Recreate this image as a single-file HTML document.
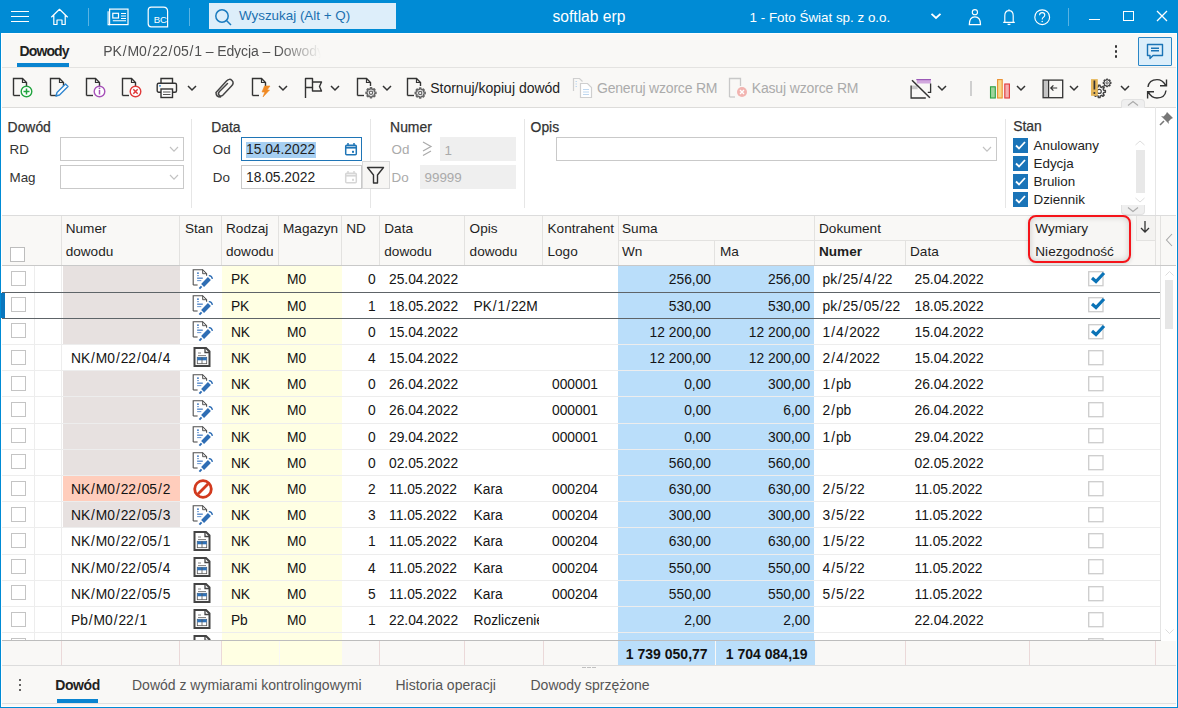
<!DOCTYPE html>
<html><head><meta charset="utf-8"><style>
html,body{margin:0;padding:0;width:1178px;height:708px;overflow:hidden;background:#F9F8F6;font-family:"Liberation Sans", sans-serif}
body>div,body>svg,div>div,div>svg{position:absolute}
.t{white-space:nowrap}
.sl{margin:0 0.92px}
svg{overflow:visible}
</style></head><body>
<div style="left:0px;top:0px;width:1178px;height:33px;background:#008BD5"></div>
<div style="left:11px;top:11px;width:18px;height:1.3px;background:#fff"></div>
<div style="left:11px;top:16px;width:18px;height:1.3px;background:#fff"></div>
<div style="left:11px;top:21px;width:18px;height:1.3px;background:#fff"></div>
<svg style="left:50px;top:8px;" width="20" height="18" viewBox="0 0 20 18"><path d="M1.3 9.2 L9.5 1.3 L17.7 9.2 M3.8 7.2 V16.5 H7 V12 H12 V16.5 H15.2 V7.2" fill="none" stroke="#fff" stroke-width="1.2" stroke-linejoin="round"/></svg>
<div style="left:88px;top:8px;width:1px;height:18px;background:rgba(255,255,255,0.35)"></div>
<svg style="left:107px;top:8px;" width="22" height="18" viewBox="0 0 22 18"><rect x="2.6" y="1.1" width="18.4" height="15.5" fill="none" stroke="#fff" stroke-width="1.2"/><path d="M1.1 3.2 V16.6 H3" fill="none" stroke="#fff" stroke-width="1.1"/><rect x="5.8" y="5.3" width="5.7" height="4.7" fill="none" stroke="#fff" stroke-width="1.2"/><path d="M14 5.5 H19 M14 8 H19 M14 10.5 H19 M5.8 12.8 H19" stroke="#fff" stroke-width="1.1"/></svg>
<svg style="left:147px;top:6px;" width="23" height="22" viewBox="0 0 23 22"><path d="M4.2 1.2 H16.5 Q20.6 1.2 20.6 5.3 V20.8 H4.2 Q1.2 20.8 1.2 17.8 V4.2 Q1.2 1.2 4.2 1.2 Z" fill="none" stroke="#fff" stroke-width="1.2"/><text x="13.3" y="16.6" font-family="Liberation Sans" font-size="9.6" fill="#fff" text-anchor="middle">BC</text></svg>
<div style="left:189px;top:8px;width:1px;height:18px;background:rgba(255,255,255,0.35)"></div>
<div style="left:209px;top:3px;width:187px;height:26px;background:#DDEEFA"></div>
<svg style="left:214px;top:8px;" width="19" height="18" viewBox="0 0 19 18"><circle cx="8" cy="8" r="6.2" fill="none" stroke="#1A7BBF" stroke-width="1.5"/><path d="M12.5 12.5 L17 17" stroke="#1A7BBF" stroke-width="1.5"/></svg>
<div class="t" style="left:239px;top:9.16px;font-size:13.4px;line-height:13.4px;color:#1A70B0;font-weight:400;">Wyszukaj (Alt + Q)</div>
<div class="t" style="left:552.5px;top:8.79px;font-size:15.6px;line-height:15.6px;color:#fff;font-weight:400;">softlab erp</div>
<div class="t" style="left:749.6px;top:10.66px;font-size:13.4px;line-height:13.4px;color:#fff;font-weight:400;">1 - Foto Świat sp. z o.o.</div>
<svg style="left:930px;top:12px;" width="12" height="8" viewBox="0 0 12 8"><path d="M1.5 1.8 L6 6 L10.5 1.8" fill="none" stroke="#fff" stroke-width="1.8"/></svg>
<svg style="left:968px;top:8px;" width="15" height="18" viewBox="0 0 15 18"><circle cx="6.9" cy="4.2" r="2.6" fill="none" stroke="#fff" stroke-width="1.1"/><path d="M1.3 16.6 Q1.3 8.9 6.9 8.9 Q12.5 8.9 12.5 16.6 Z" fill="none" stroke="#fff" stroke-width="1.2"/></svg>
<svg style="left:1002px;top:8px;" width="15" height="18" viewBox="0 0 15 18"><path d="M7 1.2 V2.4 M2.8 14.3 V7.8 Q2.8 2.6 7 2.6 Q11.2 2.6 11.2 7.8 V14.3 H12.8 H1.2 Z" fill="none" stroke="#fff" stroke-width="1.15"/><path d="M5.6 16.4 H8.4" stroke="#fff" stroke-width="1.3"/></svg>
<svg style="left:1033px;top:9px;" width="19" height="17" viewBox="0 0 19 17"><circle cx="9.2" cy="8.2" r="7.4" fill="none" stroke="#fff" stroke-width="1.15"/><path d="M6.6 6.3 Q6.6 3.6 9.2 3.6 Q11.8 3.6 11.8 6.1 Q11.8 7.6 10.2 8.4 Q9.2 9 9.2 10.5" fill="none" stroke="#fff" stroke-width="1.1"/><circle cx="9.2" cy="12.5" r="0.75" fill="#fff"/></svg>
<div style="left:1067.5px;top:8px;width:1px;height:18px;background:rgba(255,255,255,0.35)"></div>
<div style="left:1088.5px;top:19px;width:11px;height:1.4px;background:#fff"></div>
<div style="left:1122.5px;top:10.5px;width:11px;height:10px;border:1.3px solid #fff;box-sizing:border-box"></div>
<svg style="left:1156px;top:10px;" width="12" height="12" viewBox="0 0 12 12"><path d="M1 1 L11 11 M11 1 L1 11" stroke="#fff" stroke-width="1.3"/></svg>
<div style="left:1px;top:33px;width:1175px;height:34px;background:#F9F8F6"></div>
<div class="t" style="left:19.6px;top:44.15px;font-size:14px;line-height:14px;color:#222;font-weight:700;letter-spacing:-0.9px">Dowody</div>
<div style="left:17px;top:63px;width:52px;height:4px;background:#0A84D0"></div>
<div class="t" style="left:103.3px;top:44.15px;font-size:14px;line-height:14px;color:#505050;font-weight:400;letter-spacing:-0.1px;-webkit-mask-image:linear-gradient(to right,#000 175px,transparent 218px);width:225px;overflow:hidden;white-space:nowrap">PK<span class=sl>/</span>M0<span class=sl>/</span>22<span class=sl>/</span>05<span class=sl>/</span>1 – Edycja – Dowody</div>
<div style="left:1px;top:67px;width:1175px;height:1px;background:#E4E3E1"></div>
<div style="left:1114.8px;top:45.3px;width:2.5px;height:2.5px;background:#333;border-radius:1px"></div>
<div style="left:1114.8px;top:50.3px;width:2.5px;height:2.5px;background:#333;border-radius:1px"></div>
<div style="left:1114.8px;top:55.199999999999996px;width:2.5px;height:2.5px;background:#333;border-radius:1px"></div>
<div style="left:1138px;top:37px;width:34px;height:29px;background:#DCEEFA;border:1px solid #2A86C6;box-sizing:border-box;border-radius:1px"></div>
<svg style="left:1146px;top:43px;" width="18" height="18" viewBox="0 0 18 18"><path d="M1.5 1.5 H16.5 V12.5 H7 L4 15.5 V12.5 H1.5 Z" fill="none" stroke="#1A73B5" stroke-width="1.4" stroke-linejoin="round"/><path d="M5 5.2 H13 M5 7.8 H13" stroke="#1A73B5" stroke-width="1.4"/></svg>
<div style="left:1px;top:68px;width:1175px;height:39px;background:#F9F8F6"></div>
<div style="left:1px;top:107px;width:1175px;height:1px;background:#DDDCDA"></div>
<svg style="left:11.8px;top:76.9px;" width="22" height="22" viewBox="0 0 22 22"><path d="M1.5 18.5 V1.5 H10.5 L14.5 5.5 V9" fill="none" stroke="#333" stroke-width="1.4"/><path d="M10.5 1.5 V5.5 H14.5" fill="none" stroke="#333" stroke-width="1.2"/><path d="M1.5 18.5 H8" fill="none" stroke="#333" stroke-width="1.4"/><circle cx="14.5" cy="14.5" r="5.3" fill="#fff" stroke="#22A43F" stroke-width="1.4"/><path d="M14.5 11.5 V17.5 M11.5 14.5 H17.5" stroke="#22A43F" stroke-width="1.5"/></svg>
<svg style="left:48.8px;top:76.9px;" width="22" height="22" viewBox="0 0 22 22"><path d="M1.5 18.5 V1.5 H10.5 L14.5 5.5 V9" fill="none" stroke="#333" stroke-width="1.4"/><path d="M10.5 1.5 V5.5 H14.5" fill="none" stroke="#333" stroke-width="1.2"/><path d="M1.5 18.5 H8" fill="none" stroke="#333" stroke-width="1.4"/><path d="M7 19 L8 15.5 L16.5 7 L19 9.5 L10.5 18 Z" fill="#fff" stroke="#2F86D0" stroke-width="1.4" stroke-linejoin="round"/></svg>
<svg style="left:84.8px;top:76.9px;" width="22" height="22" viewBox="0 0 22 22"><path d="M1.5 18.5 V1.5 H10.5 L14.5 5.5 V9" fill="none" stroke="#333" stroke-width="1.4"/><path d="M10.5 1.5 V5.5 H14.5" fill="none" stroke="#333" stroke-width="1.2"/><path d="M1.5 18.5 H8" fill="none" stroke="#333" stroke-width="1.4"/><circle cx="14.5" cy="14.5" r="5.3" fill="#fff" stroke="#A752B8" stroke-width="1.4"/><path d="M14.5 13 V17.5" stroke="#A752B8" stroke-width="1.5"/><circle cx="14.5" cy="11.3" r="0.9" fill="#A752B8"/></svg>
<svg style="left:120.8px;top:76.9px;" width="22" height="22" viewBox="0 0 22 22"><path d="M1.5 18.5 V1.5 H10.5 L14.5 5.5 V9" fill="none" stroke="#333" stroke-width="1.4"/><path d="M10.5 1.5 V5.5 H14.5" fill="none" stroke="#333" stroke-width="1.2"/><path d="M1.5 18.5 H8" fill="none" stroke="#333" stroke-width="1.4"/><circle cx="14.5" cy="14.5" r="5.3" fill="#fff" stroke="#E03A3A" stroke-width="1.4"/><path d="M12.3 12.3 L16.7 16.7 M16.7 12.3 L12.3 16.7" stroke="#E03A3A" stroke-width="1.5"/></svg>
<svg style="left:156px;top:77px;" width="22" height="22" viewBox="0 0 22 22"><path d="M5 6 V1.5 H16.5 V6" fill="none" stroke="#333" stroke-width="1.4"/><rect x="1.2" y="6.2" width="19.3" height="9" rx="1.5" fill="none" stroke="#333" stroke-width="1.4"/><rect x="5" y="12" width="11.5" height="8.5" fill="#fff" stroke="#333" stroke-width="1.4"/><path d="M7 15 H14.5 M7 17.5 H14.5" stroke="#555" stroke-width="1"/><path d="M3 8.8 H5" stroke="#2F86D0" stroke-width="1.2"/></svg>
<svg style="left:187px;top:85px;" width="10" height="6" viewBox="0 0 10 6"><path d="M1 1 L5 5 L9 1" fill="none" stroke="#333" stroke-width="1.5"/></svg>
<svg style="left:213px;top:77px;" width="22" height="22" viewBox="0 0 22 22"><path d="M7.5 20 Q3 20 3 15.5 L13.5 4 Q16.5 1 19 3.5 Q21.5 6 18.5 9 L10 18 Q8 20 6.2 18.2 Q4.5 16.5 6.5 14.5 L14.5 6.5" fill="none" stroke="#444" stroke-width="1.5" stroke-linecap="round"/></svg>
<svg style="left:251.4px;top:76.9px;" width="22" height="22" viewBox="0 0 22 22"><path d="M1.5 18.5 V1.5 H10.5 L14.5 5.5 V9" fill="none" stroke="#333" stroke-width="1.4"/><path d="M10.5 1.5 V5.5 H14.5" fill="none" stroke="#333" stroke-width="1.2"/><path d="M1.5 18.5 H8" fill="none" stroke="#333" stroke-width="1.4"/><path d="M13.5 9 L19 9 L16 13 L18.5 13 L12 20 L13.8 15 L11 15 Z" fill="#F08A24" stroke="#F08A24" stroke-width="0.6" stroke-linejoin="round"/></svg>
<svg style="left:278px;top:85px;" width="10" height="6" viewBox="0 0 10 6"><path d="M1 1 L5 5 L9 1" fill="none" stroke="#333" stroke-width="1.5"/></svg>
<svg style="left:304px;top:77px;" width="22" height="22" viewBox="0 0 22 22"><path d="M1.5 21 V1.5 H8.5 V5 H17.5 L15.5 9.5 L17.5 14 H8.5 V10.5 H1.5" fill="none" stroke="#333" stroke-width="1.4" stroke-linejoin="round"/><path d="M8.5 5 V10.5" stroke="#333" stroke-width="1.4"/></svg>
<svg style="left:330px;top:85px;" width="10" height="6" viewBox="0 0 10 6"><path d="M1 1 L5 5 L9 1" fill="none" stroke="#333" stroke-width="1.5"/></svg>
<svg style="left:356px;top:76.9px;" width="22" height="22" viewBox="0 0 22 22"><path d="M1.5 18.5 V1.5 H10.5 L14.5 5.5 V9" fill="none" stroke="#333" stroke-width="1.4"/><path d="M10.5 1.5 V5.5 H14.5" fill="none" stroke="#333" stroke-width="1.2"/><path d="M1.5 18.5 H8" fill="none" stroke="#333" stroke-width="1.4"/><path d="M18.60 14.93 L19.95 15.15 L19.95 16.45 L18.60 16.67 L18.16 17.73 L18.96 18.85 L18.05 19.76 L16.93 18.96 L15.87 19.40 L15.65 20.75 L14.35 20.75 L14.13 19.40 L13.07 18.96 L11.95 19.76 L11.04 18.85 L11.84 17.73 L11.40 16.67 L10.05 16.45 L10.05 15.15 L11.40 14.93 L11.84 13.87 L11.04 12.75 L11.95 11.84 L13.07 12.64 L14.13 12.20 L14.35 10.85 L15.65 10.85 L15.87 12.20 L16.93 12.64 L18.05 11.84 L18.96 12.75 L18.16 13.87 Z" fill="#fff" stroke="#666" stroke-width="1.5" stroke-linejoin="round"/><circle cx="15" cy="15.8" r="1.67" fill="#fff" stroke="#666" stroke-width="1.20"/></svg>
<svg style="left:382px;top:85px;" width="10" height="6" viewBox="0 0 10 6"><path d="M1 1 L5 5 L9 1" fill="none" stroke="#333" stroke-width="1.5"/></svg>
<svg style="left:406px;top:76.9px;" width="22" height="22" viewBox="0 0 22 22"><path d="M1.5 18.5 V1.5 H10.5 L14.5 5.5 V9" fill="none" stroke="#333" stroke-width="1.4"/><path d="M10.5 1.5 V5.5 H14.5" fill="none" stroke="#333" stroke-width="1.2"/><path d="M1.5 18.5 H8" fill="none" stroke="#333" stroke-width="1.4"/><path d="M17.80 15.13 L19.15 15.35 L19.15 16.65 L17.80 16.87 L17.36 17.93 L18.16 19.05 L17.25 19.96 L16.13 19.16 L15.07 19.60 L14.85 20.95 L13.55 20.95 L13.33 19.60 L12.27 19.16 L11.15 19.96 L10.24 19.05 L11.04 17.93 L10.60 16.87 L9.25 16.65 L9.25 15.35 L10.60 15.13 L11.04 14.07 L10.24 12.95 L11.15 12.04 L12.27 12.84 L13.33 12.40 L13.55 11.05 L14.85 11.05 L15.07 12.40 L16.13 12.84 L17.25 12.04 L18.16 12.95 L17.36 14.07 Z" fill="#fff" stroke="#666" stroke-width="1.5" stroke-linejoin="round"/><circle cx="14.2" cy="16" r="1.67" fill="#fff" stroke="#666" stroke-width="1.20"/></svg>
<div class="t" style="left:430.2px;top:81.25px;font-size:14px;line-height:14px;color:#222;font-weight:400;">Stornuj/kopiuj dowód</div>
<svg style="left:572px;top:77px;" width="22" height="22" viewBox="0 0 22 22"><path d="M1.5 14 V1.5 H7.5 L10.5 4.5" fill="none" stroke="#CFCFCF" stroke-width="1.2"/><path d="M3.5 4.5 H5 M3.5 7 H5 M3.5 9.5 H5" stroke="#BFD8F0" stroke-width="1"/><path d="M8.5 20.5 V6.5 H15.5 L19.5 10.5 V20.5 Z" fill="#fff" stroke="#CFCFCF" stroke-width="1.2"/><path d="M11 12.5 H17 M11 15 H17 M11 17.5 H17" stroke="#BFD8F0" stroke-width="1"/></svg>
<div class="t" style="left:597px;top:81.25px;font-size:14px;line-height:14px;color:#ABABAB;font-weight:400;letter-spacing:-0.2px">Generuj wzorce RM</div>
<svg style="left:728px;top:77px;" width="22" height="22" viewBox="0 0 22 22"><path d="M1.5 20 V1.5 H12.5 V9" fill="none" stroke="#C8C8C8" stroke-width="1.3"/><path d="M1.5 20 H7" stroke="#C8C8C8" stroke-width="1.3"/><circle cx="14" cy="15" r="5" fill="#F2B4B0"/><path d="M12 13 L16 17 M16 13 L12 17" stroke="#fff" stroke-width="1.4"/></svg>
<div class="t" style="left:751.7px;top:81.25px;font-size:14px;line-height:14px;color:#ABABAB;font-weight:400;letter-spacing:-0.15px">Kasuj wzorce RM</div>
<svg style="left:910px;top:77px;" width="22" height="22" viewBox="0 0 22 22"><rect x="6.8" y="2.5" width="14" height="4" fill="#D2A8DE"/><path d="M6.3 2.6 H21" stroke="#9B59B6" stroke-width="1.2"/><rect x="1.6" y="8.6" width="6" height="3.6" fill="#C8C8C8"/><path d="M1.1 8.4 V21 H15.8" fill="none" stroke="#333" stroke-width="1.3"/><path d="M20.6 6.5 V15.4 H17.8" fill="none" stroke="#333" stroke-width="1.3"/><path d="M2 3.2 L19.9 20.8" stroke="#333" stroke-width="1.5"/></svg>
<svg style="left:937px;top:85px;" width="10" height="6" viewBox="0 0 10 6"><path d="M1 1 L5 5 L9 1" fill="none" stroke="#333" stroke-width="1.5"/></svg>
<div style="left:970px;top:81px;width:1.5px;height:15px;background:#CFCFCF"></div>
<svg style="left:989px;top:77px;" width="22" height="22" viewBox="0 0 22 22"><rect x="1.5" y="9.8" width="4.8" height="11.2" fill="#9ED49C" stroke="#2EA043" stroke-width="1.1"/><rect x="8.6" y="2.6" width="4.6" height="18.4" fill="#F8D98E" stroke="#EB8F2E" stroke-width="1.1"/><rect x="15.8" y="7" width="4.6" height="14" fill="#F4B0B0" stroke="#E03A3A" stroke-width="1.1"/></svg>
<svg style="left:1016px;top:85px;" width="10" height="6" viewBox="0 0 10 6"><path d="M1 1 L5 5 L9 1" fill="none" stroke="#333" stroke-width="1.5"/></svg>
<svg style="left:1042px;top:77px;" width="22" height="22" viewBox="0 0 22 22"><rect x="1.6" y="3.6" width="5" height="17" fill="#C4C4C4"/><rect x="1.1" y="3.1" width="19.6" height="17.6" fill="none" stroke="#333" stroke-width="1.3"/><path d="M6.6 3.1 V20.7" stroke="#333" stroke-width="1.2"/><path d="M15.2 11 H8.8 M11.4 8.4 L8.8 11 L11.4 13.6" fill="none" stroke="#333" stroke-width="1.2"/></svg>
<svg style="left:1069px;top:85px;" width="10" height="6" viewBox="0 0 10 6"><path d="M1 1 L5 5 L9 1" fill="none" stroke="#333" stroke-width="1.5"/></svg>
<svg style="left:1090px;top:76px;" width="24" height="24" viewBox="0 0 24 24"><path d="M13.67 14.32 L15.36 14.60 L15.36 16.20 L13.67 16.48 L13.13 17.80 L14.12 19.19 L12.99 20.32 L11.60 19.33 L10.28 19.87 L10.00 21.56 L8.40 21.56 L8.12 19.87 L6.80 19.33 L5.41 20.32 L4.28 19.19 L5.27 17.80 L4.73 16.48 L3.04 16.20 L3.04 14.60 L4.73 14.32 L5.27 13.00 L4.28 11.61 L5.41 10.48 L6.80 11.47 L8.12 10.93 L8.40 9.24 L10.00 9.24 L10.28 10.93 L11.60 11.47 L12.99 10.48 L14.12 11.61 L13.13 13.00 Z" fill="#fff" stroke="#444" stroke-width="1.5" stroke-linejoin="round"/><circle cx="9.2" cy="15.4" r="2.07" fill="#fff" stroke="#444" stroke-width="1.20"/><path d="M19.92 6.22 L20.98 6.39 L20.98 7.41 L19.92 7.58 L19.58 8.41 L20.20 9.29 L19.49 10.00 L18.61 9.38 L17.78 9.72 L17.61 10.78 L16.59 10.78 L16.42 9.72 L15.59 9.38 L14.71 10.00 L14.00 9.29 L14.62 8.41 L14.28 7.58 L13.22 7.41 L13.22 6.39 L14.28 6.22 L14.62 5.39 L14.00 4.51 L14.71 3.80 L15.59 4.42 L16.42 4.08 L16.59 3.02 L17.61 3.02 L17.78 4.08 L18.61 4.42 L19.49 3.80 L20.20 4.51 L19.58 5.39 Z" fill="#fff" stroke="#444" stroke-width="1.1" stroke-linejoin="round"/><circle cx="17.1" cy="6.9" r="1.16" fill="#fff" stroke="#444" stroke-width="0.88"/><rect x="1" y="3.1" width="6.8" height="16.7" fill="#E6B75A"/><path d="M4.4 4.5 V13.5" stroke="#333" stroke-width="1.7"/><circle cx="4.4" cy="17" r="1" fill="#333"/></svg>
<svg style="left:1120px;top:85px;" width="10" height="6" viewBox="0 0 10 6"><path d="M1 1 L5 5 L9 1" fill="none" stroke="#333" stroke-width="1.5"/></svg>
<svg style="left:1145px;top:77px;" width="24" height="24" viewBox="0 0 24 24"><path d="M3 10 Q4 2.6 12 2.6 Q17.5 2.6 20.5 8.2 M21.5 2.4 V8.8 H15" fill="none" stroke="#333" stroke-width="1.4"/><path d="M21 13.5 Q20 21 12 21 Q6.5 21 3.5 15.4 M2.6 21.5 V14.8 H9" fill="none" stroke="#333" stroke-width="1.4"/></svg>
<div style="left:1121px;top:99px;width:24px;height:9px;background:#EFEFEF;border:1px solid #E2E2E2;border-bottom:none;box-sizing:border-box;border-radius:4px 4px 0 0"></div>
<svg style="left:1126px;top:100px;" width="14" height="7" viewBox="0 0 14 7"><path d="M2 5.5 L7 1.5 L12 5.5" fill="none" stroke="#AAA" stroke-width="1.1"/></svg>
<div style="left:1px;top:108px;width:1175px;height:107px;background:#FFFFFF"></div>
<div class="t" style="left:7.6px;top:120.53px;font-size:13.9px;line-height:13.9px;color:#333;font-weight:400;-webkit-text-stroke:0.25px #333">Dowód</div>
<div class="t" style="left:9.5px;top:143.06px;font-size:13.4px;line-height:13.4px;color:#333;font-weight:400;">RD</div>
<div class="t" style="left:9.5px;top:170.86px;font-size:13.4px;line-height:13.4px;color:#333;font-weight:400;">Mag</div>
<div style="left:60px;top:137px;width:124px;height:24px;background:#fff;border:1px solid #C9C9C9;box-sizing:border-box"></div>
<svg style="left:168.5px;top:145.8px;" width="10" height="7" viewBox="0 0 10 7"><path d="M1 1 L5 5.2 L9 1" fill="none" stroke="#C2C2C2" stroke-width="1.15"/></svg>
<div style="left:60px;top:165px;width:124px;height:24px;background:#fff;border:1px solid #C9C9C9;box-sizing:border-box"></div>
<svg style="left:168.5px;top:173.8px;" width="10" height="7" viewBox="0 0 10 7"><path d="M1 1 L5 5.2 L9 1" fill="none" stroke="#C2C2C2" stroke-width="1.15"/></svg>
<div style="left:191px;top:119px;width:1px;height:89px;background:#E6E6E6"></div>
<div class="t" style="left:211.2px;top:120.53px;font-size:13.9px;line-height:13.9px;color:#333;font-weight:400;-webkit-text-stroke:0.25px #333">Data</div>
<div class="t" style="left:212.8px;top:143.06px;font-size:13.4px;line-height:13.4px;color:#333;font-weight:400;">Od</div>
<div class="t" style="left:212.8px;top:170.86px;font-size:13.4px;line-height:13.4px;color:#333;font-weight:400;">Do</div>
<div style="left:241px;top:137px;width:121px;height:24px;background:#fff;border:1.5px solid #1F75B6;box-sizing:border-box"></div>
<div style="left:246px;top:141.5px;width:69.5px;height:16px;background:#A6CFF2"></div>
<div class="t" style="left:246px;top:143.02px;font-size:13.8px;line-height:13.8px;color:#222;font-weight:400;">15.04.2022</div>
<svg style="left:344px;top:142px;" width="14" height="14" viewBox="0 0 14 14"><rect x="1.7" y="3.2" width="10.6" height="9.6" rx="1" fill="none" stroke="#1F75B6" stroke-width="1.5"/><path d="M1.7 5.6 H12.3" stroke="#1F75B6" stroke-width="2"/><path d="M4 1 V3.5 M10 1 V3.5" stroke="#1F75B6" stroke-width="1.5"/><rect x="8" y="8.8" width="2" height="2" fill="#1F75B6"/></svg>
<div style="left:241px;top:165px;width:121px;height:24px;background:#fff;border:1px solid #C9C9C9;box-sizing:border-box"></div>
<div class="t" style="left:246px;top:170.72px;font-size:13.8px;line-height:13.8px;color:#222;font-weight:400;">18.05.2022</div>
<svg style="left:344px;top:170px;" width="14" height="14" viewBox="0 0 14 14"><rect x="1.7" y="3.2" width="10.6" height="9.6" rx="1" fill="none" stroke="#D6D6D6" stroke-width="1.5"/><path d="M1.7 5.6 H12.3" stroke="#D6D6D6" stroke-width="2"/><path d="M4 1 V3.5 M10 1 V3.5" stroke="#D6D6D6" stroke-width="1.5"/><rect x="8" y="8.8" width="2" height="2" fill="#D6D6D6"/></svg>
<div style="left:362px;top:161px;width:28px;height:28px;background:#F7F6F4;border:1px solid #D9D9D9;box-sizing:border-box"></div>
<svg style="left:365px;top:165px;" width="22" height="20" viewBox="0 0 22 20"><path d="M2.5 2.5 H18.5 L12.5 10 V18 H8.5 V10 Z" fill="none" stroke="#333" stroke-width="1.4" stroke-linejoin="round"/></svg>
<div style="left:370px;top:119px;width:1px;height:42px;background:#E6E6E6"></div>
<div style="left:370px;top:189px;width:1px;height:19px;background:#E6E6E6"></div>
<div class="t" style="left:390.1px;top:120.53px;font-size:13.9px;line-height:13.9px;color:#333;font-weight:400;-webkit-text-stroke:0.25px #333">Numer</div>
<div class="t" style="left:391.6px;top:143.06px;font-size:13.4px;line-height:13.4px;color:#AAAAAA;font-weight:400;">Od</div>
<div class="t" style="left:391.6px;top:170.86px;font-size:13.4px;line-height:13.4px;color:#AAAAAA;font-weight:400;">Do</div>
<svg style="left:421px;top:140px;" width="12" height="18" viewBox="0 0 12 18"><path d="M2 2 L10 6.5 L2 11 M2 15.5 L10 11" fill="none" stroke="#AAAAAA" stroke-width="1.2"/></svg>
<div style="left:440px;top:137px;width:76px;height:24px;background:#EFEFEF"></div>
<div class="t" style="left:444.5px;top:143.56px;font-size:13.4px;line-height:13.4px;color:#AAAAAA;font-weight:400;">1</div>
<div style="left:420px;top:165px;width:96px;height:24px;background:#EFEFEF"></div>
<div class="t" style="left:424.5px;top:171.26px;font-size:13.4px;line-height:13.4px;color:#AAAAAA;font-weight:400;">99999</div>
<div style="left:524px;top:119px;width:1px;height:89px;background:#E6E6E6"></div>
<div class="t" style="left:530.6px;top:120.53px;font-size:13.9px;line-height:13.9px;color:#333;font-weight:400;-webkit-text-stroke:0.25px #333">Opis</div>
<div style="left:556px;top:137px;width:441px;height:24px;background:#fff;border:1px solid #C9C9C9;box-sizing:border-box"></div>
<svg style="left:981.5px;top:145.8px;" width="10" height="7" viewBox="0 0 10 7"><path d="M1 1 L5 5.2 L9 1" fill="none" stroke="#C2C2C2" stroke-width="1.15"/></svg>
<div style="left:1005px;top:119px;width:1px;height:89px;background:#E6E6E6"></div>
<div class="t" style="left:1013.2px;top:119.63px;font-size:13.9px;line-height:13.9px;color:#333;font-weight:400;-webkit-text-stroke:0.25px #333">Stan</div>
<svg style="left:1012.6px;top:137.89999999999998px;" width="15" height="15" viewBox="0 0 15 15"><rect x="0" y="0" width="15" height="15" fill="#1A74B8"/><path d="M3 7.5 L6 10.5 L12 4" fill="none" stroke="#fff" stroke-width="1.8"/></svg>
<div class="t" style="left:1033.5px;top:139.06px;font-size:13.4px;line-height:13.4px;color:#222;font-weight:400;">Anulowany</div>
<svg style="left:1012.6px;top:156.2px;" width="15" height="15" viewBox="0 0 15 15"><rect x="0" y="0" width="15" height="15" fill="#1A74B8"/><path d="M3 7.5 L6 10.5 L12 4" fill="none" stroke="#fff" stroke-width="1.8"/></svg>
<div class="t" style="left:1033.5px;top:157.36px;font-size:13.4px;line-height:13.4px;color:#222;font-weight:400;">Edycja</div>
<svg style="left:1012.6px;top:174.2px;" width="15" height="15" viewBox="0 0 15 15"><rect x="0" y="0" width="15" height="15" fill="#1A74B8"/><path d="M3 7.5 L6 10.5 L12 4" fill="none" stroke="#fff" stroke-width="1.8"/></svg>
<div class="t" style="left:1033.5px;top:175.36px;font-size:13.4px;line-height:13.4px;color:#222;font-weight:400;">Brulion</div>
<svg style="left:1012.6px;top:191.89999999999998px;" width="15" height="15" viewBox="0 0 15 15"><rect x="0" y="0" width="15" height="15" fill="#1A74B8"/><path d="M3 7.5 L6 10.5 L12 4" fill="none" stroke="#fff" stroke-width="1.8"/></svg>
<div class="t" style="left:1033.5px;top:193.06px;font-size:13.4px;line-height:13.4px;color:#222;font-weight:400;">Dziennik</div>
<svg style="left:1134px;top:139px;" width="12" height="8" viewBox="0 0 12 8"><path d="M1.5 6 L6 2 L10.5 6" fill="none" stroke="#DDD" stroke-width="1"/></svg>
<div style="left:1136px;top:149.5px;width:9px;height:43px;background:#E8E8E8"></div>
<svg style="left:1134px;top:196px;" width="12" height="8" viewBox="0 0 12 8"><path d="M1.5 2 L6 6 L10.5 2" fill="none" stroke="#DDD" stroke-width="1"/></svg>
<div style="left:1121px;top:205px;width:24px;height:10px;background:#EFEFEF;border:1px solid #E2E2E2;border-top:none;box-sizing:border-box;border-radius:0 0 4px 4px"></div>
<svg style="left:1126px;top:206px;" width="14" height="7" viewBox="0 0 14 7"><path d="M2 1.5 L7 5.5 L12 1.5" fill="none" stroke="#AAA" stroke-width="1.1"/></svg>
<div style="left:1155px;top:107px;width:1px;height:108px;background:#E6E6E6"></div>
<svg style="left:1158px;top:110px;" width="17" height="17" viewBox="0 0 17 17"><path d="M9 2 L15 8 L13 9 L10.5 11.5 L11 14 L3 6 L5.5 6.5 L8 4 Z" fill="#777"/><path d="M6 11 L2 15" stroke="#777" stroke-width="1.6"/></svg>
<div style="left:1px;top:215px;width:1160px;height:50px;background:#F9F8F6"></div>
<div style="left:1px;top:215px;width:1175px;height:1px;background:#DCDCDC"></div>
<div style="left:1px;top:265px;width:1175px;height:1px;background:#C9C9C9"></div>
<div style="left:61px;top:216px;width:1px;height:49px;background:#E3E2E0"></div>
<div style="left:179px;top:216px;width:1px;height:49px;background:#E3E2E0"></div>
<div style="left:221px;top:216px;width:1px;height:49px;background:#E3E2E0"></div>
<div style="left:278px;top:216px;width:1px;height:49px;background:#E3E2E0"></div>
<div style="left:341px;top:216px;width:1px;height:49px;background:#E3E2E0"></div>
<div style="left:379px;top:216px;width:1px;height:49px;background:#E3E2E0"></div>
<div style="left:464px;top:216px;width:1px;height:49px;background:#E3E2E0"></div>
<div style="left:542px;top:216px;width:1px;height:49px;background:#E3E2E0"></div>
<div style="left:618px;top:216px;width:1px;height:49px;background:#E3E2E0"></div>
<div style="left:714px;top:241px;width:1px;height:24px;background:#E3E2E0"></div>
<div style="left:814px;top:216px;width:1px;height:49px;background:#E3E2E0"></div>
<div style="left:905px;top:241px;width:1px;height:24px;background:#E3E2E0"></div>
<div style="left:618px;top:240px;width:410px;height:1px;background:#E3E2E0"></div>
<div style="left:1155px;top:216px;width:1px;height:49px;background:#E3E2E0"></div>
<div style="left:10px;top:247px;width:15px;height:15px;background:#fff;border:1px solid #BDBDBD;box-sizing:border-box"></div>
<div class="t" style="left:65.7px;top:221.79px;font-size:13.6px;line-height:13.6px;color:#1E1E1E;font-weight:400;">Numer</div>
<div class="t" style="left:65.7px;top:244.69px;font-size:13.6px;line-height:13.6px;color:#1E1E1E;font-weight:400;">dowodu</div>
<div class="t" style="left:185.0px;top:221.79px;font-size:13.6px;line-height:13.6px;color:#1E1E1E;font-weight:400;">Stan</div>
<div class="t" style="left:226.0px;top:221.79px;font-size:13.6px;line-height:13.6px;color:#1E1E1E;font-weight:400;">Rodzaj</div>
<div class="t" style="left:226.0px;top:244.69px;font-size:13.6px;line-height:13.6px;color:#1E1E1E;font-weight:400;">dowodu</div>
<div class="t" style="left:283.0px;top:221.79px;font-size:13.6px;line-height:13.6px;color:#1E1E1E;font-weight:400;">Magazyn</div>
<div class="t" style="left:346.3px;top:221.79px;font-size:13.6px;line-height:13.6px;color:#1E1E1E;font-weight:400;">ND</div>
<div class="t" style="left:384.3px;top:221.79px;font-size:13.6px;line-height:13.6px;color:#1E1E1E;font-weight:400;">Data</div>
<div class="t" style="left:384.3px;top:244.69px;font-size:13.6px;line-height:13.6px;color:#1E1E1E;font-weight:400;">dowodu</div>
<div class="t" style="left:469.6px;top:221.79px;font-size:13.6px;line-height:13.6px;color:#1E1E1E;font-weight:400;">Opis</div>
<div class="t" style="left:469.6px;top:244.69px;font-size:13.6px;line-height:13.6px;color:#1E1E1E;font-weight:400;">dowodu</div>
<div class="t" style="left:547.5px;top:221.79px;font-size:13.6px;line-height:13.6px;color:#1E1E1E;font-weight:400;">Kontrahent</div>
<div class="t" style="left:547.5px;top:244.69px;font-size:13.6px;line-height:13.6px;color:#1E1E1E;font-weight:400;">Logo</div>
<div class="t" style="left:622.0px;top:221.79px;font-size:13.6px;line-height:13.6px;color:#1E1E1E;font-weight:400;">Suma</div>
<div class="t" style="left:622.0px;top:244.69px;font-size:13.6px;line-height:13.6px;color:#1E1E1E;font-weight:400;">Wn</div>
<div class="t" style="left:720.0px;top:244.69px;font-size:13.6px;line-height:13.6px;color:#1E1E1E;font-weight:400;">Ma</div>
<div class="t" style="left:819.0px;top:221.79px;font-size:13.6px;line-height:13.6px;color:#1E1E1E;font-weight:400;">Dokument</div>
<div class="t" style="left:819.0px;top:244.69px;font-size:13.6px;line-height:13.6px;color:#1E1E1E;font-weight:700;">Numer</div>
<div class="t" style="left:910.0px;top:244.69px;font-size:13.6px;line-height:13.6px;color:#1E1E1E;font-weight:400;">Data</div>
<div style="left:1027.8px;top:214.6px;width:103.3px;height:48.8px;border:2px solid #F5141A;border-radius:8px;box-sizing:border-box;background:#F7F6F4;box-shadow:inset 0 0 6px rgba(0,0,0,0.18), 0 1px 4px rgba(0,0,0,0.15)"></div>
<div class="t" style="left:1035.3px;top:221.79px;font-size:13.6px;line-height:13.6px;color:#1E1E1E;font-weight:400;">Wymiary</div>
<div class="t" style="left:1035.3px;top:244.69px;font-size:13.6px;line-height:13.6px;color:#1E1E1E;font-weight:400;">Niezgodność</div>
<div style="left:1135.5px;top:215.5px;width:20px;height:25px;background:#F4F3F1;border:1px solid #E3E2E0;border-top:none;box-sizing:border-box"></div>
<svg style="left:1138px;top:219px;" width="14" height="16" viewBox="0 0 14 16"><path d="M7 2 V13 M3 9 L7 13 L11 9" fill="none" stroke="#333" stroke-width="1.3"/></svg>
<div style="left:1161px;top:216px;width:15px;height:49px;background:#F9F8F6"></div>
<div style="left:1160px;top:216px;width:1px;height:49px;background:#E3E2E0"></div>
<svg style="left:1163px;top:232px;" width="14" height="16" viewBox="0 0 14 16"><path d="M9 2 L3.5 8 L9 14" fill="none" stroke="#A8A8A8" stroke-width="1.1"/></svg>
<div style="left:1px;top:266px;width:1160px;height:374px;overflow:hidden">
<div style="left:0px;top:0px;width:1160px;height:374px;background:#fff"></div>
<div style="left:221px;top:0px;width:120px;height:374px;background:#FFFFE3"></div>
<div style="left:617px;top:0px;width:196px;height:374px;background:#BADEFA"></div>
<div style="left:62px;top:-0.19999999999998863px;width:117px;height:26.2px;background:#E7E1E0"></div>
<div style="left:10px;top:5.0px;width:15px;height:15px;background:#fff;border:1px solid #C4C4C4;box-sizing:border-box"></div>
<svg style="left:191px;top:2.8000000000000114px" width="22" height="22" viewBox="0 0 22 22"><path d="M1.2 16 V0.7 H10.6 L14.6 4.7 V6.8" fill="none" stroke="#4F4F4F" stroke-width="1.1"/><path d="M10.6 0.7 V4.7 H14.6 Z" fill="#E0E0E0" stroke="#4F4F4F" stroke-width="0.9"/><path d="M1.2 16 H5.6" stroke="#4F4F4F" stroke-width="1.1"/><rect x="5.1" y="3.4" width="1.7" height="1.5" fill="#3A74BC"/><rect x="5.1" y="6.3" width="1.8" height="0.8" fill="#3A74BC"/><rect x="5.1" y="8.5" width="5.7" height="1.4" fill="#5A8CCB"/><rect x="5.1" y="11.2" width="4.2" height="0.9" fill="#5A8CCB"/><path d="M10.6 16.4 L17.4 9.6" stroke="#2E6DB4" stroke-width="4.2"/><path d="M7.4 19.6 L9.6 17.4" stroke="#2E6DB4" stroke-width="2"/><path d="M16.8 6.6 Q19.8 6.4 20.4 9.8" fill="none" stroke="#2E6DB4" stroke-width="1.4"/></svg>
<div class="t" style="left:229.9px;top:7.32px;font-size:13.8px;line-height:13.8px;color:#141414;font-weight:400;">PK</div>
<div class="t" style="left:286px;top:7.32px;font-size:13.8px;line-height:13.8px;color:#141414;font-weight:400;">M0</div>
<div class="t" style="left:-25.399999999999977px;width:400px;text-align:right;top:7.32px;font-size:13.8px;line-height:13.8px;color:#141414;font-weight:400;">0</div>
<div class="t" style="left:388px;top:7.32px;font-size:13.8px;line-height:13.8px;color:#141414;font-weight:400;">25.04.2022</div>
<div class="t" style="left:310px;width:400px;text-align:right;top:7.32px;font-size:13.8px;line-height:13.8px;color:#141414;font-weight:400;">256,00</div>
<div class="t" style="left:409.20000000000005px;width:400px;text-align:right;top:7.32px;font-size:13.8px;line-height:13.8px;color:#141414;font-weight:400;">256,00</div>
<div class="t" style="left:821.6px;top:7.32px;font-size:13.8px;line-height:13.8px;color:#141414;font-weight:400;">pk<span class="sl">/</span>25<span class="sl">/</span>4<span class="sl">/</span>22</div>
<div class="t" style="left:913.5px;top:7.32px;font-size:13.8px;line-height:13.8px;color:#141414;font-weight:400;">25.04.2022</div>
<svg style="left:1087px;top:3.1999999999999886px" width="20" height="17" viewBox="0 0 20 17"><rect x="0.7" y="2.7" width="14.3" height="14" fill="#fff" stroke="#CCC" stroke-width="1.3"/><path d="M4 9 L8 12.5 L16 4" fill="none" stroke="#0A73B7" stroke-width="3.2"/></svg>
<div style="left:62px;top:26.0px;width:117px;height:26.2px;background:#E7E1E0"></div>
<div style="left:10px;top:31.19999999999999px;width:15px;height:15px;background:#fff;border:1px solid #C4C4C4;box-sizing:border-box"></div>
<svg style="left:191px;top:29.0px" width="22" height="22" viewBox="0 0 22 22"><path d="M1.2 16 V0.7 H10.6 L14.6 4.7 V6.8" fill="none" stroke="#4F4F4F" stroke-width="1.1"/><path d="M10.6 0.7 V4.7 H14.6 Z" fill="#E0E0E0" stroke="#4F4F4F" stroke-width="0.9"/><path d="M1.2 16 H5.6" stroke="#4F4F4F" stroke-width="1.1"/><rect x="5.1" y="3.4" width="1.7" height="1.5" fill="#3A74BC"/><rect x="5.1" y="6.3" width="1.8" height="0.8" fill="#3A74BC"/><rect x="5.1" y="8.5" width="5.7" height="1.4" fill="#5A8CCB"/><rect x="5.1" y="11.2" width="4.2" height="0.9" fill="#5A8CCB"/><path d="M10.6 16.4 L17.4 9.6" stroke="#2E6DB4" stroke-width="4.2"/><path d="M7.4 19.6 L9.6 17.4" stroke="#2E6DB4" stroke-width="2"/><path d="M16.8 6.6 Q19.8 6.4 20.4 9.8" fill="none" stroke="#2E6DB4" stroke-width="1.4"/></svg>
<div class="t" style="left:229.9px;top:33.52px;font-size:13.8px;line-height:13.8px;color:#141414;font-weight:400;">PK</div>
<div class="t" style="left:286px;top:33.52px;font-size:13.8px;line-height:13.8px;color:#141414;font-weight:400;">M0</div>
<div class="t" style="left:-25.399999999999977px;width:400px;text-align:right;top:33.52px;font-size:13.8px;line-height:13.8px;color:#141414;font-weight:400;">1</div>
<div class="t" style="left:388px;top:33.52px;font-size:13.8px;line-height:13.8px;color:#141414;font-weight:400;">18.05.2022</div>
<div class="t" style="left:472.5px;top:33.52px;font-size:13.8px;line-height:13.8px;color:#141414;font-weight:400;width:65px;overflow:hidden;white-space:nowrap">PK<span class="sl">/</span>1<span class="sl">/</span>22M</div>
<div class="t" style="left:310px;width:400px;text-align:right;top:33.52px;font-size:13.8px;line-height:13.8px;color:#141414;font-weight:400;">530,00</div>
<div class="t" style="left:409.20000000000005px;width:400px;text-align:right;top:33.52px;font-size:13.8px;line-height:13.8px;color:#141414;font-weight:400;">530,00</div>
<div class="t" style="left:821.6px;top:33.52px;font-size:13.8px;line-height:13.8px;color:#141414;font-weight:400;">pk<span class="sl">/</span>25<span class="sl">/</span>05<span class="sl">/</span>22</div>
<div class="t" style="left:913.5px;top:33.52px;font-size:13.8px;line-height:13.8px;color:#141414;font-weight:400;">18.05.2022</div>
<svg style="left:1087px;top:29.399999999999977px" width="20" height="17" viewBox="0 0 20 17"><rect x="0.7" y="2.7" width="14.3" height="14" fill="#fff" stroke="#CCC" stroke-width="1.3"/><path d="M4 9 L8 12.5 L16 4" fill="none" stroke="#0A73B7" stroke-width="3.2"/></svg>
<div style="left:62px;top:52.19999999999999px;width:117px;height:26.2px;background:#E7E1E0"></div>
<div style="left:10px;top:57.39999999999998px;width:15px;height:15px;background:#fff;border:1px solid #C4C4C4;box-sizing:border-box"></div>
<svg style="left:191px;top:55.19999999999999px" width="22" height="22" viewBox="0 0 22 22"><path d="M1.2 16 V0.7 H10.6 L14.6 4.7 V6.8" fill="none" stroke="#4F4F4F" stroke-width="1.1"/><path d="M10.6 0.7 V4.7 H14.6 Z" fill="#E0E0E0" stroke="#4F4F4F" stroke-width="0.9"/><path d="M1.2 16 H5.6" stroke="#4F4F4F" stroke-width="1.1"/><rect x="5.1" y="3.4" width="1.7" height="1.5" fill="#3A74BC"/><rect x="5.1" y="6.3" width="1.8" height="0.8" fill="#3A74BC"/><rect x="5.1" y="8.5" width="5.7" height="1.4" fill="#5A8CCB"/><rect x="5.1" y="11.2" width="4.2" height="0.9" fill="#5A8CCB"/><path d="M10.6 16.4 L17.4 9.6" stroke="#2E6DB4" stroke-width="4.2"/><path d="M7.4 19.6 L9.6 17.4" stroke="#2E6DB4" stroke-width="2"/><path d="M16.8 6.6 Q19.8 6.4 20.4 9.8" fill="none" stroke="#2E6DB4" stroke-width="1.4"/></svg>
<div class="t" style="left:229.9px;top:59.72px;font-size:13.8px;line-height:13.8px;color:#141414;font-weight:400;">NK</div>
<div class="t" style="left:286px;top:59.72px;font-size:13.8px;line-height:13.8px;color:#141414;font-weight:400;">M0</div>
<div class="t" style="left:-25.399999999999977px;width:400px;text-align:right;top:59.72px;font-size:13.8px;line-height:13.8px;color:#141414;font-weight:400;">0</div>
<div class="t" style="left:388px;top:59.72px;font-size:13.8px;line-height:13.8px;color:#141414;font-weight:400;">15.04.2022</div>
<div class="t" style="left:310px;width:400px;text-align:right;top:59.72px;font-size:13.8px;line-height:13.8px;color:#141414;font-weight:400;">12 200,00</div>
<div class="t" style="left:409.20000000000005px;width:400px;text-align:right;top:59.72px;font-size:13.8px;line-height:13.8px;color:#141414;font-weight:400;">12 200,00</div>
<div class="t" style="left:821.6px;top:59.72px;font-size:13.8px;line-height:13.8px;color:#141414;font-weight:400;">1<span class="sl">/</span>4<span class="sl">/</span>2022</div>
<div class="t" style="left:913.5px;top:59.72px;font-size:13.8px;line-height:13.8px;color:#141414;font-weight:400;">15.04.2022</div>
<svg style="left:1087px;top:55.599999999999966px" width="20" height="17" viewBox="0 0 20 17"><rect x="0.7" y="2.7" width="14.3" height="14" fill="#fff" stroke="#CCC" stroke-width="1.3"/><path d="M4 9 L8 12.5 L16 4" fill="none" stroke="#0A73B7" stroke-width="3.2"/></svg>
<div style="left:10px;top:83.59999999999997px;width:15px;height:15px;background:#fff;border:1px solid #C4C4C4;box-sizing:border-box"></div>
<div class="t" style="left:70px;top:85.92px;font-size:13.8px;line-height:13.8px;color:#141414;font-weight:400;">NK<span class="sl">/</span>M0<span class="sl">/</span>22<span class="sl">/</span>04<span class="sl">/</span>4</div>
<svg style="left:192.3px;top:81.09999999999997px" width="18" height="21" viewBox="0 0 18 21"><path d="M1.5 1 H13 L16.5 4.5 V19 H1.5 Z" fill="#fff" stroke="#444" stroke-width="2"/><path d="M12 1 V5.5 H16.5" fill="none" stroke="#444" stroke-width="1.3"/><path d="M5 6 H8 M5 8.5 H13" stroke="#888" stroke-width="1"/><rect x="4.3" y="10.3" width="9.4" height="6.4" fill="#fff" stroke="#555" stroke-width="0.8"/><rect x="4.3" y="10.3" width="9.4" height="3" fill="#2E72BA"/><path d="M9 10.3 V16.7" stroke="#555" stroke-width="0.8"/></svg>
<div class="t" style="left:229.9px;top:85.92px;font-size:13.8px;line-height:13.8px;color:#141414;font-weight:400;">NK</div>
<div class="t" style="left:286px;top:85.92px;font-size:13.8px;line-height:13.8px;color:#141414;font-weight:400;">M0</div>
<div class="t" style="left:-25.399999999999977px;width:400px;text-align:right;top:85.92px;font-size:13.8px;line-height:13.8px;color:#141414;font-weight:400;">4</div>
<div class="t" style="left:388px;top:85.92px;font-size:13.8px;line-height:13.8px;color:#141414;font-weight:400;">15.04.2022</div>
<div class="t" style="left:310px;width:400px;text-align:right;top:85.92px;font-size:13.8px;line-height:13.8px;color:#141414;font-weight:400;">12 200,00</div>
<div class="t" style="left:409.20000000000005px;width:400px;text-align:right;top:85.92px;font-size:13.8px;line-height:13.8px;color:#141414;font-weight:400;">12 200,00</div>
<div class="t" style="left:821.6px;top:85.92px;font-size:13.8px;line-height:13.8px;color:#141414;font-weight:400;">2<span class="sl">/</span>4<span class="sl">/</span>2022</div>
<div class="t" style="left:913.5px;top:85.92px;font-size:13.8px;line-height:13.8px;color:#141414;font-weight:400;">15.04.2022</div>
<svg style="left:1087px;top:81.79999999999995px" width="20" height="17" viewBox="0 0 20 17"><rect x="0.7" y="2.7" width="14.3" height="14" fill="#fff" stroke="#CCC" stroke-width="1.3"/></svg>
<div style="left:62px;top:104.60000000000002px;width:117px;height:26.2px;background:#E7E1E0"></div>
<div style="left:10px;top:109.80000000000001px;width:15px;height:15px;background:#fff;border:1px solid #C4C4C4;box-sizing:border-box"></div>
<svg style="left:191px;top:107.60000000000002px" width="22" height="22" viewBox="0 0 22 22"><path d="M1.2 16 V0.7 H10.6 L14.6 4.7 V6.8" fill="none" stroke="#4F4F4F" stroke-width="1.1"/><path d="M10.6 0.7 V4.7 H14.6 Z" fill="#E0E0E0" stroke="#4F4F4F" stroke-width="0.9"/><path d="M1.2 16 H5.6" stroke="#4F4F4F" stroke-width="1.1"/><rect x="5.1" y="3.4" width="1.7" height="1.5" fill="#3A74BC"/><rect x="5.1" y="6.3" width="1.8" height="0.8" fill="#3A74BC"/><rect x="5.1" y="8.5" width="5.7" height="1.4" fill="#5A8CCB"/><rect x="5.1" y="11.2" width="4.2" height="0.9" fill="#5A8CCB"/><path d="M10.6 16.4 L17.4 9.6" stroke="#2E6DB4" stroke-width="4.2"/><path d="M7.4 19.6 L9.6 17.4" stroke="#2E6DB4" stroke-width="2"/><path d="M16.8 6.6 Q19.8 6.4 20.4 9.8" fill="none" stroke="#2E6DB4" stroke-width="1.4"/></svg>
<div class="t" style="left:229.9px;top:112.12px;font-size:13.8px;line-height:13.8px;color:#141414;font-weight:400;">NK</div>
<div class="t" style="left:286px;top:112.12px;font-size:13.8px;line-height:13.8px;color:#141414;font-weight:400;">M0</div>
<div class="t" style="left:-25.399999999999977px;width:400px;text-align:right;top:112.12px;font-size:13.8px;line-height:13.8px;color:#141414;font-weight:400;">0</div>
<div class="t" style="left:388px;top:112.12px;font-size:13.8px;line-height:13.8px;color:#141414;font-weight:400;">26.04.2022</div>
<div class="t" style="left:551px;top:112.12px;font-size:13.8px;line-height:13.8px;color:#141414;font-weight:400;">000001</div>
<div class="t" style="left:310px;width:400px;text-align:right;top:112.12px;font-size:13.8px;line-height:13.8px;color:#141414;font-weight:400;">0,00</div>
<div class="t" style="left:409.20000000000005px;width:400px;text-align:right;top:112.12px;font-size:13.8px;line-height:13.8px;color:#141414;font-weight:400;">300,00</div>
<div class="t" style="left:821.6px;top:112.12px;font-size:13.8px;line-height:13.8px;color:#141414;font-weight:400;">1<span class="sl">/</span>pb</div>
<div class="t" style="left:913.5px;top:112.12px;font-size:13.8px;line-height:13.8px;color:#141414;font-weight:400;">26.04.2022</div>
<svg style="left:1087px;top:108.0px" width="20" height="17" viewBox="0 0 20 17"><rect x="0.7" y="2.7" width="14.3" height="14" fill="#fff" stroke="#CCC" stroke-width="1.3"/></svg>
<div style="left:62px;top:130.8px;width:117px;height:26.2px;background:#E7E1E0"></div>
<div style="left:10px;top:136.0px;width:15px;height:15px;background:#fff;border:1px solid #C4C4C4;box-sizing:border-box"></div>
<svg style="left:191px;top:133.8px" width="22" height="22" viewBox="0 0 22 22"><path d="M1.2 16 V0.7 H10.6 L14.6 4.7 V6.8" fill="none" stroke="#4F4F4F" stroke-width="1.1"/><path d="M10.6 0.7 V4.7 H14.6 Z" fill="#E0E0E0" stroke="#4F4F4F" stroke-width="0.9"/><path d="M1.2 16 H5.6" stroke="#4F4F4F" stroke-width="1.1"/><rect x="5.1" y="3.4" width="1.7" height="1.5" fill="#3A74BC"/><rect x="5.1" y="6.3" width="1.8" height="0.8" fill="#3A74BC"/><rect x="5.1" y="8.5" width="5.7" height="1.4" fill="#5A8CCB"/><rect x="5.1" y="11.2" width="4.2" height="0.9" fill="#5A8CCB"/><path d="M10.6 16.4 L17.4 9.6" stroke="#2E6DB4" stroke-width="4.2"/><path d="M7.4 19.6 L9.6 17.4" stroke="#2E6DB4" stroke-width="2"/><path d="M16.8 6.6 Q19.8 6.4 20.4 9.8" fill="none" stroke="#2E6DB4" stroke-width="1.4"/></svg>
<div class="t" style="left:229.9px;top:138.32px;font-size:13.8px;line-height:13.8px;color:#141414;font-weight:400;">NK</div>
<div class="t" style="left:286px;top:138.32px;font-size:13.8px;line-height:13.8px;color:#141414;font-weight:400;">M0</div>
<div class="t" style="left:-25.399999999999977px;width:400px;text-align:right;top:138.32px;font-size:13.8px;line-height:13.8px;color:#141414;font-weight:400;">0</div>
<div class="t" style="left:388px;top:138.32px;font-size:13.8px;line-height:13.8px;color:#141414;font-weight:400;">26.04.2022</div>
<div class="t" style="left:551px;top:138.32px;font-size:13.8px;line-height:13.8px;color:#141414;font-weight:400;">000001</div>
<div class="t" style="left:310px;width:400px;text-align:right;top:138.32px;font-size:13.8px;line-height:13.8px;color:#141414;font-weight:400;">0,00</div>
<div class="t" style="left:409.20000000000005px;width:400px;text-align:right;top:138.32px;font-size:13.8px;line-height:13.8px;color:#141414;font-weight:400;">6,00</div>
<div class="t" style="left:821.6px;top:138.32px;font-size:13.8px;line-height:13.8px;color:#141414;font-weight:400;">2<span class="sl">/</span>pb</div>
<div class="t" style="left:913.5px;top:138.32px;font-size:13.8px;line-height:13.8px;color:#141414;font-weight:400;">26.04.2022</div>
<svg style="left:1087px;top:134.2px" width="20" height="17" viewBox="0 0 20 17"><rect x="0.7" y="2.7" width="14.3" height="14" fill="#fff" stroke="#CCC" stroke-width="1.3"/></svg>
<div style="left:62px;top:157.0px;width:117px;height:26.2px;background:#E7E1E0"></div>
<div style="left:10px;top:162.2px;width:15px;height:15px;background:#fff;border:1px solid #C4C4C4;box-sizing:border-box"></div>
<svg style="left:191px;top:160.0px" width="22" height="22" viewBox="0 0 22 22"><path d="M1.2 16 V0.7 H10.6 L14.6 4.7 V6.8" fill="none" stroke="#4F4F4F" stroke-width="1.1"/><path d="M10.6 0.7 V4.7 H14.6 Z" fill="#E0E0E0" stroke="#4F4F4F" stroke-width="0.9"/><path d="M1.2 16 H5.6" stroke="#4F4F4F" stroke-width="1.1"/><rect x="5.1" y="3.4" width="1.7" height="1.5" fill="#3A74BC"/><rect x="5.1" y="6.3" width="1.8" height="0.8" fill="#3A74BC"/><rect x="5.1" y="8.5" width="5.7" height="1.4" fill="#5A8CCB"/><rect x="5.1" y="11.2" width="4.2" height="0.9" fill="#5A8CCB"/><path d="M10.6 16.4 L17.4 9.6" stroke="#2E6DB4" stroke-width="4.2"/><path d="M7.4 19.6 L9.6 17.4" stroke="#2E6DB4" stroke-width="2"/><path d="M16.8 6.6 Q19.8 6.4 20.4 9.8" fill="none" stroke="#2E6DB4" stroke-width="1.4"/></svg>
<div class="t" style="left:229.9px;top:164.52px;font-size:13.8px;line-height:13.8px;color:#141414;font-weight:400;">NK</div>
<div class="t" style="left:286px;top:164.52px;font-size:13.8px;line-height:13.8px;color:#141414;font-weight:400;">M0</div>
<div class="t" style="left:-25.399999999999977px;width:400px;text-align:right;top:164.52px;font-size:13.8px;line-height:13.8px;color:#141414;font-weight:400;">0</div>
<div class="t" style="left:388px;top:164.52px;font-size:13.8px;line-height:13.8px;color:#141414;font-weight:400;">29.04.2022</div>
<div class="t" style="left:551px;top:164.52px;font-size:13.8px;line-height:13.8px;color:#141414;font-weight:400;">000001</div>
<div class="t" style="left:310px;width:400px;text-align:right;top:164.52px;font-size:13.8px;line-height:13.8px;color:#141414;font-weight:400;">0,00</div>
<div class="t" style="left:409.20000000000005px;width:400px;text-align:right;top:164.52px;font-size:13.8px;line-height:13.8px;color:#141414;font-weight:400;">300,00</div>
<div class="t" style="left:821.6px;top:164.52px;font-size:13.8px;line-height:13.8px;color:#141414;font-weight:400;">1<span class="sl">/</span>pb</div>
<div class="t" style="left:913.5px;top:164.52px;font-size:13.8px;line-height:13.8px;color:#141414;font-weight:400;">29.04.2022</div>
<svg style="left:1087px;top:160.39999999999998px" width="20" height="17" viewBox="0 0 20 17"><rect x="0.7" y="2.7" width="14.3" height="14" fill="#fff" stroke="#CCC" stroke-width="1.3"/></svg>
<div style="left:62px;top:183.20000000000005px;width:117px;height:26.2px;background:#E7E1E0"></div>
<div style="left:10px;top:188.40000000000003px;width:15px;height:15px;background:#fff;border:1px solid #C4C4C4;box-sizing:border-box"></div>
<svg style="left:191px;top:186.20000000000005px" width="22" height="22" viewBox="0 0 22 22"><path d="M1.2 16 V0.7 H10.6 L14.6 4.7 V6.8" fill="none" stroke="#4F4F4F" stroke-width="1.1"/><path d="M10.6 0.7 V4.7 H14.6 Z" fill="#E0E0E0" stroke="#4F4F4F" stroke-width="0.9"/><path d="M1.2 16 H5.6" stroke="#4F4F4F" stroke-width="1.1"/><rect x="5.1" y="3.4" width="1.7" height="1.5" fill="#3A74BC"/><rect x="5.1" y="6.3" width="1.8" height="0.8" fill="#3A74BC"/><rect x="5.1" y="8.5" width="5.7" height="1.4" fill="#5A8CCB"/><rect x="5.1" y="11.2" width="4.2" height="0.9" fill="#5A8CCB"/><path d="M10.6 16.4 L17.4 9.6" stroke="#2E6DB4" stroke-width="4.2"/><path d="M7.4 19.6 L9.6 17.4" stroke="#2E6DB4" stroke-width="2"/><path d="M16.8 6.6 Q19.8 6.4 20.4 9.8" fill="none" stroke="#2E6DB4" stroke-width="1.4"/></svg>
<div class="t" style="left:229.9px;top:190.72px;font-size:13.8px;line-height:13.8px;color:#141414;font-weight:400;">NK</div>
<div class="t" style="left:286px;top:190.72px;font-size:13.8px;line-height:13.8px;color:#141414;font-weight:400;">M0</div>
<div class="t" style="left:-25.399999999999977px;width:400px;text-align:right;top:190.72px;font-size:13.8px;line-height:13.8px;color:#141414;font-weight:400;">0</div>
<div class="t" style="left:388px;top:190.72px;font-size:13.8px;line-height:13.8px;color:#141414;font-weight:400;">02.05.2022</div>
<div class="t" style="left:310px;width:400px;text-align:right;top:190.72px;font-size:13.8px;line-height:13.8px;color:#141414;font-weight:400;">560,00</div>
<div class="t" style="left:409.20000000000005px;width:400px;text-align:right;top:190.72px;font-size:13.8px;line-height:13.8px;color:#141414;font-weight:400;">560,00</div>
<div class="t" style="left:913.5px;top:190.72px;font-size:13.8px;line-height:13.8px;color:#141414;font-weight:400;">02.05.2022</div>
<svg style="left:1087px;top:186.60000000000002px" width="20" height="17" viewBox="0 0 20 17"><rect x="0.7" y="2.7" width="14.3" height="14" fill="#fff" stroke="#CCC" stroke-width="1.3"/></svg>
<div style="left:62px;top:209.39999999999998px;width:117px;height:26.2px;background:#FFCDBC"></div>
<div style="left:10px;top:214.59999999999997px;width:15px;height:15px;background:#fff;border:1px solid #C4C4C4;box-sizing:border-box"></div>
<div class="t" style="left:70px;top:216.92px;font-size:13.8px;line-height:13.8px;color:#141414;font-weight:400;">NK<span class="sl">/</span>M0<span class="sl">/</span>22<span class="sl">/</span>05<span class="sl">/</span>2</div>
<svg style="left:192px;top:212.89999999999998px" width="20" height="20" viewBox="0 0 20 20"><circle cx="10" cy="10" r="8.3" fill="none" stroke="#D23A1E" stroke-width="2.8"/><path d="M4.8 15.2 L15.2 4.8" stroke="#D23A1E" stroke-width="2.8"/></svg>
<div class="t" style="left:229.9px;top:216.92px;font-size:13.8px;line-height:13.8px;color:#141414;font-weight:400;">NK</div>
<div class="t" style="left:286px;top:216.92px;font-size:13.8px;line-height:13.8px;color:#141414;font-weight:400;">M0</div>
<div class="t" style="left:-25.399999999999977px;width:400px;text-align:right;top:216.92px;font-size:13.8px;line-height:13.8px;color:#141414;font-weight:400;">2</div>
<div class="t" style="left:388px;top:216.92px;font-size:13.8px;line-height:13.8px;color:#141414;font-weight:400;">11.05.2022</div>
<div class="t" style="left:472.5px;top:216.92px;font-size:13.8px;line-height:13.8px;color:#141414;font-weight:400;width:65px;overflow:hidden;white-space:nowrap">Kara</div>
<div class="t" style="left:551px;top:216.92px;font-size:13.8px;line-height:13.8px;color:#141414;font-weight:400;">000204</div>
<div class="t" style="left:310px;width:400px;text-align:right;top:216.92px;font-size:13.8px;line-height:13.8px;color:#141414;font-weight:400;">630,00</div>
<div class="t" style="left:409.20000000000005px;width:400px;text-align:right;top:216.92px;font-size:13.8px;line-height:13.8px;color:#141414;font-weight:400;">630,00</div>
<div class="t" style="left:821.6px;top:216.92px;font-size:13.8px;line-height:13.8px;color:#141414;font-weight:400;">2<span class="sl">/</span>5<span class="sl">/</span>22</div>
<div class="t" style="left:913.5px;top:216.92px;font-size:13.8px;line-height:13.8px;color:#141414;font-weight:400;">11.05.2022</div>
<svg style="left:1087px;top:212.79999999999995px" width="20" height="17" viewBox="0 0 20 17"><rect x="0.7" y="2.7" width="14.3" height="14" fill="#fff" stroke="#CCC" stroke-width="1.3"/></svg>
<div style="left:62px;top:235.60000000000002px;width:117px;height:26.2px;background:#E7E1E0"></div>
<div style="left:10px;top:240.8px;width:15px;height:15px;background:#fff;border:1px solid #C4C4C4;box-sizing:border-box"></div>
<div class="t" style="left:70px;top:243.12px;font-size:13.8px;line-height:13.8px;color:#141414;font-weight:400;">NK<span class="sl">/</span>M0<span class="sl">/</span>22<span class="sl">/</span>05<span class="sl">/</span>3</div>
<svg style="left:191px;top:238.60000000000002px" width="22" height="22" viewBox="0 0 22 22"><path d="M1.2 16 V0.7 H10.6 L14.6 4.7 V6.8" fill="none" stroke="#4F4F4F" stroke-width="1.1"/><path d="M10.6 0.7 V4.7 H14.6 Z" fill="#E0E0E0" stroke="#4F4F4F" stroke-width="0.9"/><path d="M1.2 16 H5.6" stroke="#4F4F4F" stroke-width="1.1"/><rect x="5.1" y="3.4" width="1.7" height="1.5" fill="#3A74BC"/><rect x="5.1" y="6.3" width="1.8" height="0.8" fill="#3A74BC"/><rect x="5.1" y="8.5" width="5.7" height="1.4" fill="#5A8CCB"/><rect x="5.1" y="11.2" width="4.2" height="0.9" fill="#5A8CCB"/><path d="M10.6 16.4 L17.4 9.6" stroke="#2E6DB4" stroke-width="4.2"/><path d="M7.4 19.6 L9.6 17.4" stroke="#2E6DB4" stroke-width="2"/><path d="M16.8 6.6 Q19.8 6.4 20.4 9.8" fill="none" stroke="#2E6DB4" stroke-width="1.4"/></svg>
<div class="t" style="left:229.9px;top:243.12px;font-size:13.8px;line-height:13.8px;color:#141414;font-weight:400;">NK</div>
<div class="t" style="left:286px;top:243.12px;font-size:13.8px;line-height:13.8px;color:#141414;font-weight:400;">M0</div>
<div class="t" style="left:-25.399999999999977px;width:400px;text-align:right;top:243.12px;font-size:13.8px;line-height:13.8px;color:#141414;font-weight:400;">3</div>
<div class="t" style="left:388px;top:243.12px;font-size:13.8px;line-height:13.8px;color:#141414;font-weight:400;">11.05.2022</div>
<div class="t" style="left:472.5px;top:243.12px;font-size:13.8px;line-height:13.8px;color:#141414;font-weight:400;width:65px;overflow:hidden;white-space:nowrap">Kara</div>
<div class="t" style="left:551px;top:243.12px;font-size:13.8px;line-height:13.8px;color:#141414;font-weight:400;">000204</div>
<div class="t" style="left:310px;width:400px;text-align:right;top:243.12px;font-size:13.8px;line-height:13.8px;color:#141414;font-weight:400;">300,00</div>
<div class="t" style="left:409.20000000000005px;width:400px;text-align:right;top:243.12px;font-size:13.8px;line-height:13.8px;color:#141414;font-weight:400;">300,00</div>
<div class="t" style="left:821.6px;top:243.12px;font-size:13.8px;line-height:13.8px;color:#141414;font-weight:400;">3<span class="sl">/</span>5<span class="sl">/</span>22</div>
<div class="t" style="left:913.5px;top:243.12px;font-size:13.8px;line-height:13.8px;color:#141414;font-weight:400;">11.05.2022</div>
<svg style="left:1087px;top:239.0px" width="20" height="17" viewBox="0 0 20 17"><rect x="0.7" y="2.7" width="14.3" height="14" fill="#fff" stroke="#CCC" stroke-width="1.3"/></svg>
<div style="left:10px;top:267.0px;width:15px;height:15px;background:#fff;border:1px solid #C4C4C4;box-sizing:border-box"></div>
<div class="t" style="left:70px;top:269.32px;font-size:13.8px;line-height:13.8px;color:#141414;font-weight:400;">NK<span class="sl">/</span>M0<span class="sl">/</span>22<span class="sl">/</span>05<span class="sl">/</span>1</div>
<svg style="left:192.3px;top:264.5px" width="18" height="21" viewBox="0 0 18 21"><path d="M1.5 1 H13 L16.5 4.5 V19 H1.5 Z" fill="#fff" stroke="#444" stroke-width="2"/><path d="M12 1 V5.5 H16.5" fill="none" stroke="#444" stroke-width="1.3"/><path d="M5 6 H8 M5 8.5 H13" stroke="#888" stroke-width="1"/><rect x="4.3" y="10.3" width="9.4" height="6.4" fill="#fff" stroke="#555" stroke-width="0.8"/><rect x="4.3" y="10.3" width="9.4" height="3" fill="#2E72BA"/><path d="M9 10.3 V16.7" stroke="#555" stroke-width="0.8"/></svg>
<div class="t" style="left:229.9px;top:269.32px;font-size:13.8px;line-height:13.8px;color:#141414;font-weight:400;">NK</div>
<div class="t" style="left:286px;top:269.32px;font-size:13.8px;line-height:13.8px;color:#141414;font-weight:400;">M0</div>
<div class="t" style="left:-25.399999999999977px;width:400px;text-align:right;top:269.32px;font-size:13.8px;line-height:13.8px;color:#141414;font-weight:400;">1</div>
<div class="t" style="left:388px;top:269.32px;font-size:13.8px;line-height:13.8px;color:#141414;font-weight:400;">11.05.2022</div>
<div class="t" style="left:472.5px;top:269.32px;font-size:13.8px;line-height:13.8px;color:#141414;font-weight:400;width:65px;overflow:hidden;white-space:nowrap">Kara</div>
<div class="t" style="left:551px;top:269.32px;font-size:13.8px;line-height:13.8px;color:#141414;font-weight:400;">000204</div>
<div class="t" style="left:310px;width:400px;text-align:right;top:269.32px;font-size:13.8px;line-height:13.8px;color:#141414;font-weight:400;">630,00</div>
<div class="t" style="left:409.20000000000005px;width:400px;text-align:right;top:269.32px;font-size:13.8px;line-height:13.8px;color:#141414;font-weight:400;">630,00</div>
<div class="t" style="left:821.6px;top:269.32px;font-size:13.8px;line-height:13.8px;color:#141414;font-weight:400;">1<span class="sl">/</span>5<span class="sl">/</span>22</div>
<div class="t" style="left:913.5px;top:269.32px;font-size:13.8px;line-height:13.8px;color:#141414;font-weight:400;">11.05.2022</div>
<svg style="left:1087px;top:265.19999999999993px" width="20" height="17" viewBox="0 0 20 17"><rect x="0.7" y="2.7" width="14.3" height="14" fill="#fff" stroke="#CCC" stroke-width="1.3"/></svg>
<div style="left:10px;top:293.20000000000005px;width:15px;height:15px;background:#fff;border:1px solid #C4C4C4;box-sizing:border-box"></div>
<div class="t" style="left:70px;top:295.52px;font-size:13.8px;line-height:13.8px;color:#141414;font-weight:400;">NK<span class="sl">/</span>M0<span class="sl">/</span>22<span class="sl">/</span>05<span class="sl">/</span>4</div>
<svg style="left:192.3px;top:290.70000000000005px" width="18" height="21" viewBox="0 0 18 21"><path d="M1.5 1 H13 L16.5 4.5 V19 H1.5 Z" fill="#fff" stroke="#444" stroke-width="2"/><path d="M12 1 V5.5 H16.5" fill="none" stroke="#444" stroke-width="1.3"/><path d="M5 6 H8 M5 8.5 H13" stroke="#888" stroke-width="1"/><rect x="4.3" y="10.3" width="9.4" height="6.4" fill="#fff" stroke="#555" stroke-width="0.8"/><rect x="4.3" y="10.3" width="9.4" height="3" fill="#2E72BA"/><path d="M9 10.3 V16.7" stroke="#555" stroke-width="0.8"/></svg>
<div class="t" style="left:229.9px;top:295.52px;font-size:13.8px;line-height:13.8px;color:#141414;font-weight:400;">NK</div>
<div class="t" style="left:286px;top:295.52px;font-size:13.8px;line-height:13.8px;color:#141414;font-weight:400;">M0</div>
<div class="t" style="left:-25.399999999999977px;width:400px;text-align:right;top:295.52px;font-size:13.8px;line-height:13.8px;color:#141414;font-weight:400;">4</div>
<div class="t" style="left:388px;top:295.52px;font-size:13.8px;line-height:13.8px;color:#141414;font-weight:400;">11.05.2022</div>
<div class="t" style="left:472.5px;top:295.52px;font-size:13.8px;line-height:13.8px;color:#141414;font-weight:400;width:65px;overflow:hidden;white-space:nowrap">Kara</div>
<div class="t" style="left:551px;top:295.52px;font-size:13.8px;line-height:13.8px;color:#141414;font-weight:400;">000204</div>
<div class="t" style="left:310px;width:400px;text-align:right;top:295.52px;font-size:13.8px;line-height:13.8px;color:#141414;font-weight:400;">550,00</div>
<div class="t" style="left:409.20000000000005px;width:400px;text-align:right;top:295.52px;font-size:13.8px;line-height:13.8px;color:#141414;font-weight:400;">550,00</div>
<div class="t" style="left:821.6px;top:295.52px;font-size:13.8px;line-height:13.8px;color:#141414;font-weight:400;">4<span class="sl">/</span>5<span class="sl">/</span>22</div>
<div class="t" style="left:913.5px;top:295.52px;font-size:13.8px;line-height:13.8px;color:#141414;font-weight:400;">11.05.2022</div>
<svg style="left:1087px;top:291.4px" width="20" height="17" viewBox="0 0 20 17"><rect x="0.7" y="2.7" width="14.3" height="14" fill="#fff" stroke="#CCC" stroke-width="1.3"/></svg>
<div style="left:10px;top:319.4000000000001px;width:15px;height:15px;background:#fff;border:1px solid #C4C4C4;box-sizing:border-box"></div>
<div class="t" style="left:70px;top:321.72px;font-size:13.8px;line-height:13.8px;color:#141414;font-weight:400;">NK<span class="sl">/</span>M0<span class="sl">/</span>22<span class="sl">/</span>05<span class="sl">/</span>5</div>
<svg style="left:192.3px;top:316.9000000000001px" width="18" height="21" viewBox="0 0 18 21"><path d="M1.5 1 H13 L16.5 4.5 V19 H1.5 Z" fill="#fff" stroke="#444" stroke-width="2"/><path d="M12 1 V5.5 H16.5" fill="none" stroke="#444" stroke-width="1.3"/><path d="M5 6 H8 M5 8.5 H13" stroke="#888" stroke-width="1"/><rect x="4.3" y="10.3" width="9.4" height="6.4" fill="#fff" stroke="#555" stroke-width="0.8"/><rect x="4.3" y="10.3" width="9.4" height="3" fill="#2E72BA"/><path d="M9 10.3 V16.7" stroke="#555" stroke-width="0.8"/></svg>
<div class="t" style="left:229.9px;top:321.72px;font-size:13.8px;line-height:13.8px;color:#141414;font-weight:400;">NK</div>
<div class="t" style="left:286px;top:321.72px;font-size:13.8px;line-height:13.8px;color:#141414;font-weight:400;">M0</div>
<div class="t" style="left:-25.399999999999977px;width:400px;text-align:right;top:321.72px;font-size:13.8px;line-height:13.8px;color:#141414;font-weight:400;">5</div>
<div class="t" style="left:388px;top:321.72px;font-size:13.8px;line-height:13.8px;color:#141414;font-weight:400;">11.05.2022</div>
<div class="t" style="left:472.5px;top:321.72px;font-size:13.8px;line-height:13.8px;color:#141414;font-weight:400;width:65px;overflow:hidden;white-space:nowrap">Kara</div>
<div class="t" style="left:551px;top:321.72px;font-size:13.8px;line-height:13.8px;color:#141414;font-weight:400;">000204</div>
<div class="t" style="left:310px;width:400px;text-align:right;top:321.72px;font-size:13.8px;line-height:13.8px;color:#141414;font-weight:400;">550,00</div>
<div class="t" style="left:409.20000000000005px;width:400px;text-align:right;top:321.72px;font-size:13.8px;line-height:13.8px;color:#141414;font-weight:400;">550,00</div>
<div class="t" style="left:821.6px;top:321.72px;font-size:13.8px;line-height:13.8px;color:#141414;font-weight:400;">5<span class="sl">/</span>5<span class="sl">/</span>22</div>
<div class="t" style="left:913.5px;top:321.72px;font-size:13.8px;line-height:13.8px;color:#141414;font-weight:400;">11.05.2022</div>
<svg style="left:1087px;top:317.6px" width="20" height="17" viewBox="0 0 20 17"><rect x="0.7" y="2.7" width="14.3" height="14" fill="#fff" stroke="#CCC" stroke-width="1.3"/></svg>
<div style="left:10px;top:345.6px;width:15px;height:15px;background:#fff;border:1px solid #C4C4C4;box-sizing:border-box"></div>
<div class="t" style="left:70px;top:347.92px;font-size:13.8px;line-height:13.8px;color:#141414;font-weight:400;">Pb<span class="sl">/</span>M0<span class="sl">/</span>22<span class="sl">/</span>1</div>
<svg style="left:192.3px;top:343.1px" width="18" height="21" viewBox="0 0 18 21"><path d="M1.5 1 H13 L16.5 4.5 V19 H1.5 Z" fill="#fff" stroke="#444" stroke-width="2"/><path d="M12 1 V5.5 H16.5" fill="none" stroke="#444" stroke-width="1.3"/><path d="M5 6 H8 M5 8.5 H13" stroke="#888" stroke-width="1"/><rect x="4.3" y="10.3" width="9.4" height="6.4" fill="#fff" stroke="#555" stroke-width="0.8"/><rect x="4.3" y="10.3" width="9.4" height="3" fill="#2E72BA"/><path d="M9 10.3 V16.7" stroke="#555" stroke-width="0.8"/></svg>
<div class="t" style="left:229.9px;top:347.92px;font-size:13.8px;line-height:13.8px;color:#141414;font-weight:400;">Pb</div>
<div class="t" style="left:286px;top:347.92px;font-size:13.8px;line-height:13.8px;color:#141414;font-weight:400;">M0</div>
<div class="t" style="left:-25.399999999999977px;width:400px;text-align:right;top:347.92px;font-size:13.8px;line-height:13.8px;color:#141414;font-weight:400;">1</div>
<div class="t" style="left:388px;top:347.92px;font-size:13.8px;line-height:13.8px;color:#141414;font-weight:400;">22.04.2022</div>
<div class="t" style="left:472.5px;top:347.92px;font-size:13.8px;line-height:13.8px;color:#141414;font-weight:400;width:65px;overflow:hidden;white-space:nowrap">Rozliczenie</div>
<div class="t" style="left:310px;width:400px;text-align:right;top:347.92px;font-size:13.8px;line-height:13.8px;color:#141414;font-weight:400;">2,00</div>
<div class="t" style="left:409.20000000000005px;width:400px;text-align:right;top:347.92px;font-size:13.8px;line-height:13.8px;color:#141414;font-weight:400;">2,00</div>
<div class="t" style="left:913.5px;top:347.92px;font-size:13.8px;line-height:13.8px;color:#141414;font-weight:400;">22.04.2022</div>
<svg style="left:1087px;top:343.79999999999995px" width="20" height="17" viewBox="0 0 20 17"><rect x="0.7" y="2.7" width="14.3" height="14" fill="#fff" stroke="#CCC" stroke-width="1.3"/></svg>
<div style="left:10px;top:371.80000000000007px;width:15px;height:15px;background:#fff;border:1px solid #C4C4C4;box-sizing:border-box"></div>
<svg style="left:192.3px;top:369.30000000000007px" width="18" height="21" viewBox="0 0 18 21"><path d="M1.5 1 H13 L16.5 4.5 V19 H1.5 Z" fill="#fff" stroke="#444" stroke-width="2"/><path d="M12 1 V5.5 H16.5" fill="none" stroke="#444" stroke-width="1.3"/><path d="M5 6 H8 M5 8.5 H13" stroke="#888" stroke-width="1"/><rect x="4.3" y="10.3" width="9.4" height="6.4" fill="#fff" stroke="#555" stroke-width="0.8"/><rect x="4.3" y="10.3" width="9.4" height="3" fill="#2E72BA"/><path d="M9 10.3 V16.7" stroke="#555" stroke-width="0.8"/></svg>
<svg style="left:1087px;top:370.0px" width="20" height="17" viewBox="0 0 20 17"><rect x="0.7" y="2.7" width="14.3" height="14" fill="#fff" stroke="#CCC" stroke-width="1.3"/></svg>
<div style="left:0px;top:25.5px;width:1159px;height:1px;background:#EDEDED"></div>
<div style="left:0px;top:51.69999999999999px;width:1159px;height:1px;background:#EDEDED"></div>
<div style="left:0px;top:77.89999999999998px;width:1159px;height:1px;background:#EDEDED"></div>
<div style="left:0px;top:104.09999999999997px;width:1159px;height:1px;background:#EDEDED"></div>
<div style="left:0px;top:130.3px;width:1159px;height:1px;background:#EDEDED"></div>
<div style="left:0px;top:156.5px;width:1159px;height:1px;background:#EDEDED"></div>
<div style="left:0px;top:182.7px;width:1159px;height:1px;background:#EDEDED"></div>
<div style="left:0px;top:208.90000000000003px;width:1159px;height:1px;background:#EDEDED"></div>
<div style="left:0px;top:235.09999999999997px;width:1159px;height:1px;background:#EDEDED"></div>
<div style="left:0px;top:261.30000000000007px;width:1159px;height:1px;background:#EDEDED"></div>
<div style="left:0px;top:287.5px;width:1159px;height:1px;background:#EDEDED"></div>
<div style="left:0px;top:313.70000000000005px;width:1159px;height:1px;background:#EDEDED"></div>
<div style="left:0px;top:339.9000000000001px;width:1159px;height:1px;background:#EDEDED"></div>
<div style="left:0px;top:366.1px;width:1159px;height:1px;background:#EDEDED"></div>
<div style="left:0px;top:392.30000000000007px;width:1159px;height:1px;background:#EDEDED"></div>
<div style="left:33px;top:0px;width:1px;height:374px;background:#EDEDED"></div>
<div style="left:60px;top:0px;width:1px;height:374px;background:#EDEDED"></div>
<div style="left:0px;top:25.80000000000001px;width:1159px;height:1.2px;background:#5E6468"></div>
<div style="left:0px;top:51.599999999999966px;width:1159px;height:1.2px;background:#5E6468"></div>
</div>
<div style="left:1161px;top:266px;width:15px;height:375px;background:#fff"></div>
<div style="left:1160px;top:266px;width:1px;height:375px;background:#E3E3E3"></div>
<svg style="left:1164px;top:270px;" width="11" height="7" viewBox="0 0 11 7"><path d="M1.5 5.5 L5.5 1.5 L9.5 5.5" fill="none" stroke="#DDD" stroke-width="1"/></svg>
<div style="left:1165.3px;top:280px;width:7.7px;height:49px;background:#E6E6E6"></div>
<svg style="left:1164px;top:628px;" width="11" height="7" viewBox="0 0 11 7"><path d="M1.5 1.5 L5.5 5.5 L9.5 1.5" fill="none" stroke="#DDD" stroke-width="1"/></svg>
<div style="left:1px;top:640px;width:1160px;height:1px;background:#BDBDBD"></div>
<div style="left:1px;top:641px;width:1175px;height:24px;background:#F9F8F6"></div>
<div style="left:618px;top:641px;width:96.5px;height:24px;background:#BADEFA"></div>
<div style="left:716px;top:641px;width:98.5px;height:24px;background:#BADEFA"></div>
<div style="left:61px;top:641px;width:1px;height:24px;background:#EBD9D9"></div>
<div style="left:179px;top:641px;width:1px;height:24px;background:#EBD9D9"></div>
<div style="left:221px;top:641px;width:1px;height:24px;background:#EBD9D9"></div>
<div style="left:278px;top:641px;width:1px;height:24px;background:#EBD9D9"></div>
<div style="left:341px;top:641px;width:1px;height:24px;background:#EBD9D9"></div>
<div style="left:379px;top:641px;width:1px;height:24px;background:#EBD9D9"></div>
<div style="left:464px;top:641px;width:1px;height:24px;background:#EBD9D9"></div>
<div style="left:543px;top:641px;width:1px;height:24px;background:#EBD9D9"></div>
<div style="left:905px;top:641px;width:1px;height:24px;background:#EBD9D9"></div>
<div style="left:1029px;top:641px;width:1px;height:24px;background:#EBD9D9"></div>
<div style="left:1155px;top:641px;width:1px;height:24px;background:#EBD9D9"></div>
<div style="left:222px;top:641px;width:56.5px;height:24px;background:#FFFFE3"></div>
<div style="left:279.5px;top:641px;width:62px;height:24px;background:#FFFFE3"></div>
<div class="t" style="left:307.6px;width:400px;text-align:right;top:646.85px;font-size:14px;line-height:14px;color:#111;font-weight:700;letter-spacing:0px">1 739 050,77</div>
<div class="t" style="left:407.6px;width:400px;text-align:right;top:646.85px;font-size:14px;line-height:14px;color:#111;font-weight:700;letter-spacing:0px">1 704 084,19</div>
<div style="left:1px;top:664.5px;width:1175px;height:1px;background:#DCDCDC"></div>
<div style="left:1px;top:665.5px;width:1175px;height:40.5px;background:#F9F8F6"></div>
<div style="left:1px;top:664.5px;width:1175px;height:1px;background:#DCDCDC"></div>
<div style="left:582px;top:667px;width:3.5px;height:1px;background:#C0C0C0"></div>
<div style="left:587px;top:667px;width:3.5px;height:1px;background:#C0C0C0"></div>
<div style="left:592px;top:667px;width:3.5px;height:1px;background:#C0C0C0"></div>
<div style="left:18.8px;top:678.5px;width:2.2px;height:2.2px;background:#333;border-radius:1px"></div>
<div style="left:18.8px;top:683.5px;width:2.2px;height:2.2px;background:#333;border-radius:1px"></div>
<div style="left:18.8px;top:688.5px;width:2.2px;height:2.2px;background:#333;border-radius:1px"></div>
<div class="t" style="left:55.2px;top:677.85px;font-size:14px;line-height:14px;color:#222;font-weight:700;letter-spacing:-0.4px">Dowód</div>
<div style="left:57px;top:699px;width:41px;height:3.5px;background:#0A84D0"></div>
<div class="t" style="left:132px;top:677.85px;font-size:14px;line-height:14px;color:#555;font-weight:400;">Dowód z wymiarami kontrolingowymi</div>
<div class="t" style="left:395.5px;top:677.85px;font-size:14px;line-height:14px;color:#555;font-weight:400;">Historia operacji</div>
<div class="t" style="left:530.5px;top:677.85px;font-size:14px;line-height:14px;color:#555;font-weight:400;">Dowody sprzężone</div>
<div style="left:1px;top:703px;width:1175px;height:1px;background:#E0E0E0"></div>
<div style="left:0px;top:33px;width:1px;height:675px;background:#008BD5"></div>
<div style="left:1177px;top:33px;width:1px;height:675px;background:#008BD5"></div>
<div style="left:0px;top:707px;width:1178px;height:1px;background:#008BD5"></div>
<div style="left:1px;top:33px;width:1px;height:674px;background:#fff"></div>
<div style="left:1176px;top:33px;width:1px;height:674px;background:#fff"></div>
<div style="left:1px;top:706px;width:1176px;height:1px;background:#fff"></div>
<div style="left:1px;top:33px;width:1176px;height:1px;background:#fff"></div>
<div style="left:1px;top:292.6px;width:4px;height:25.4px;background:#0A76BD"></div>
</body></html>
